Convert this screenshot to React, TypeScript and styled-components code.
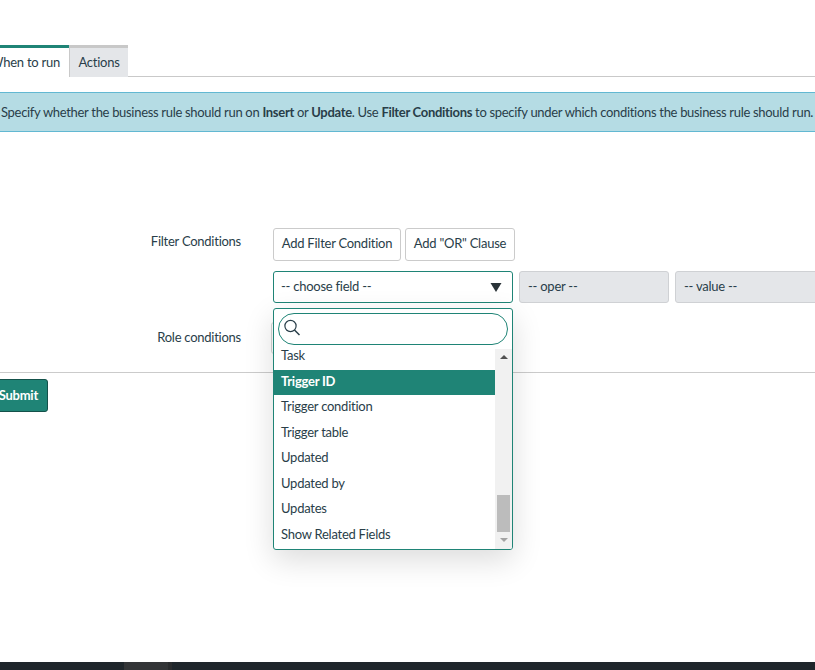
import React from "react";
import styled, { createGlobalStyle } from "styled-components";

const Global = createGlobalStyle`
  html, body { margin: 0; padding: 0; height: 100%; overflow: hidden; background: #fff; }
  #root { height: 100%; }
  * { box-sizing: border-box; }
`;

const Page = styled.div`
  height: 670px;
  width: 815px;
  overflow: hidden;
  display: flex;
  flex-direction: column;
  font-family: "Lato", "Noto Sans", sans-serif;
  font-size: 13px;
  letter-spacing: -0.25px;
  color: #293e49;
  white-space: nowrap;
`;
const Content = styled.main`
  flex: 1;
  padding-top: 45px;
`;
const TabStrip = styled.div`
  display: flex;
  height: 32px;
  border-bottom: 1px solid #c9c9c9;
`;
const Tab = styled.div<{ $active?: boolean }>`
  height: 32px;
  display: flex;
  align-items: center;
  justify-content: center;
  padding-bottom: ${(p) => (p.$active ? "0" : "1px")};
  border-top: 3px solid ${(p) => (p.$active ? "#1f8476" : "#c8c8c8")};
  background: ${(p) => (p.$active ? "#fff" : "#e4e6e9")};
  border-left: ${(p) => (p.$active ? "0" : "1px solid #c9c9c9")};
  border-bottom: ${(p) => (p.$active ? "1px solid #fff" : "0")};
  margin-left: ${(p) => (p.$active ? "-19px" : "0")};
  width: ${(p) => (p.$active ? "88px" : "59px")};
`;
const Info = styled.div`
  margin-top: 15px;
  height: 40px;
  background: #b5dce4;
  border-top: 1px solid #62b8d2;
  border-bottom: 1px solid #62b8d2;
  display: flex;
  align-items: center;
  padding: 0 0 1px 1px;
  letter-spacing: -0.31px;
  b { font-weight: 700; }
`;
const Form = styled.div`
  margin-top: 96px;
`;
const Row = styled.div`
  display: grid;
  grid-template-columns: 241px 1fr;
  column-gap: 32px;
`;
const Label = styled.div`
  text-align: right;
`;
const FilterLabel = styled(Label)`
  padding-top: 5px;
`;
const RoleLabel = styled(Label)`
  padding-top: 7px;
`;
const Controls = styled.div`
  position: relative;
  display: flex;
  flex-direction: column;
  gap: 10px;
`;
const ButtonRow = styled.div`
  display: flex;
  gap: 4px;
`;
const Ghost = styled.div<{ $w: number }>`
  width: ${(p) => p.$w}px;
  height: 33px;
  border: 1px solid #cbcbcb;
  border-radius: 3px;
  background: #fff;
  display: flex;
  align-items: center;
  justify-content: center;
  padding-bottom: 3px;
`;
const SelectRow = styled.div`
  display: flex;
  gap: 6px;
  width: 600px;
`;
const ChooseField = styled.div`
  width: 240px;
  height: 32px;
  border: 1px solid #1f8476;
  border-radius: 3px;
  display: flex;
  align-items: center;
  justify-content: space-between;
  padding: 0 10px 0 7px;
`;
const ChooseText = styled.span`
  position: relative;
  top: -1px;
`;
const Disabled = styled.div<{ $w: number }>`
  width: ${(p) => p.$w}px;
  flex: none;
  height: 32px;
  background: #e4e6e9;
  border: 1px solid #cfd1d4;
  border-radius: 3px;
  display: flex;
  align-items: center;
  padding: 0 0 2px 8px;
`;
const RoleRow = styled(Row)`
  margin-top: 19px;
  height: 50px;
`;
const RoleInput = styled.div`
  width: 40px;
  height: 32px;
  margin-left: -2px;
  border: 1px solid #d4d4d4;
  border-radius: 3px;
`;
const Divider = styled.div`
  height: 1px;
  background: #cbcbcb;
`;
const Submit = styled.button`
  display: block;
  margin: 6px 0 0 -10px;
  width: 58px;
  height: 33px;
  padding: 0 9px 2px 0;
  text-align: right;
  background: #1f8476;
  border: 1px solid #14514a;
  border-radius: 3px;
  color: #fff;
  font: 700 13px "Lato", "Noto Sans", sans-serif;
  letter-spacing: -0.25px;
`;
const Dropdown = styled.div`
  position: absolute;
  top: 80px;
  left: 0;
  width: 240px;
  height: 242px;
  background: #fff;
  border: 1px solid #1f8476;
  border-radius: 3px;
  box-shadow: 0 10px 30px rgba(0, 0, 0, 0.14);
  z-index: 3;
  overflow: hidden;
`;
const Search = styled.div`
  position: absolute;
  top: 4px;
  left: 4px;
  width: 230px;
  height: 32px;
  border: 1px solid #1f8476;
  border-radius: 16px;
  background: #fff;
  display: flex;
  align-items: center;
  padding: 0 0 2px 5px;
`;
const List = styled.div`
  position: absolute;
  top: 35px;
  left: 0;
  right: 17px;
`;
const Option = styled.div<{ $active?: boolean }>`
  height: 25.5px;
  line-height: 23px;
  padding-left: 7px;
  background: ${(p) => (p.$active ? "#1f8476" : "transparent")};
  color: ${(p) => (p.$active ? "#fff" : "#293e49")};
  font-weight: ${(p) => (p.$active ? 700 : 400)};
`;
const Scrollbar = styled.div`
  position: absolute;
  top: 40px;
  right: 0;
  bottom: 0;
  width: 17px;
  background: #f1f1f1;
  display: flex;
  flex-direction: column;
  align-items: center;
  justify-content: space-between;
  padding: 6px 2px 7px;
`;
const ThumbArea = styled.div`
  flex: 1;
  width: 13px;
  display: flex;
  flex-direction: column;
  justify-content: flex-end;
  padding-bottom: 6px;
`;
const Thumb = styled.div`
  height: 37px;
  background: #bcbcbc;
`;
const Arrow = styled.div<{ $down?: boolean; $color: string }>`
  width: 0;
  height: 0;
  border-left: 4px solid transparent;
  border-right: 4px solid transparent;
  ${(p) =>
    p.$down
      ? `border-top: 4px solid ${p.$color};`
      : `border-bottom: 4px solid ${p.$color};`}
`;
const Footer = styled.footer`
  height: 8px;
  flex: none;
  background: #1f262b;
  display: flex;
  padding-left: 124px;
`;
const FooterItem = styled.div`
  width: 48px;
  background: #333537;
  border-right: 4px solid #2a2c2e;
`;

const Caret = () => (
  <svg width="12" height="10" viewBox="0 0 12 10">
    <path d="M0.5 1h11L6 10z" fill="#2a3338" />
  </svg>
);

const SearchIcon = () => (
  <svg width="18" height="18" viewBox="0 0 18 18" fill="none" stroke="#293e49" strokeWidth="1.2">
    <circle cx="6.5" cy="7" r="5.6" />
    <path d="M10.5 11l5 5" strokeWidth="1.5" />
  </svg>
);

const options = ["Task", "Trigger ID", "Trigger condition", "Trigger table", "Updated", "Updated by", "Updates", "Show Related Fields"];

export default function App() {
  return (
    <Page>
      <Global />
      <Content>
        <TabStrip>
          <Tab $active>When to run</Tab>
          <Tab>Actions</Tab>
        </TabStrip>
        <Info>
          <span>
            Specify whether the business rule should run on <b>Insert</b> or <b>Update</b>. Use <b>Filter Conditions</b> to specify under which conditions the business rule should run.
          </span>
        </Info>
        <Form>
          <Row>
            <FilterLabel>Filter Conditions</FilterLabel>
            <Controls>
              <ButtonRow>
                <Ghost $w={128}>Add Filter Condition</Ghost>
                <Ghost $w={110}>Add "OR" Clause</Ghost>
              </ButtonRow>
              <SelectRow>
                <ChooseField>
                  <ChooseText>-- choose field --</ChooseText>
                  <Caret />
                </ChooseField>
                <Disabled $w={150}>-- oper --</Disabled>
                <Disabled $w={150}>-- value --</Disabled>
              </SelectRow>
              <Dropdown>
                <Search>
                  <SearchIcon />
                </Search>
                <List>
                  {options.map((o) => (
                    <Option key={o} $active={o === "Trigger ID"}>
                      {o}
                    </Option>
                  ))}
                </List>
                <Scrollbar>
                  <Arrow $color="#505050" />
                  <ThumbArea>
                    <Thumb />
                  </ThumbArea>
                  <Arrow $down $color="#a3a3a3" />
                </Scrollbar>
              </Dropdown>
            </Controls>
          </Row>
          <RoleRow>
            <RoleLabel>Role conditions</RoleLabel>
            <RoleInput />
          </RoleRow>
          <Divider />
          <Submit>Submit</Submit>
        </Form>
      </Content>
      <Footer>
        <FooterItem />
      </Footer>
    </Page>
  );
}
